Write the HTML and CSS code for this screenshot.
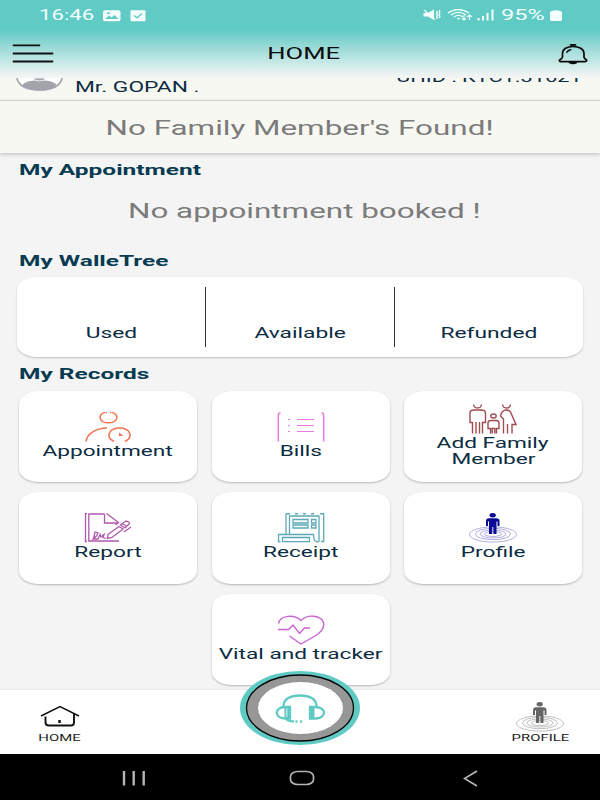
FILE: index.html
```html
<!DOCTYPE html>
<html lang="en">
<head>
<meta charset="utf-8">
<title>Home</title>
<link rel="stylesheet" href="styles.css">
</head>
<body>
<div class="phone">
  <header class="top">
    <div class="status">
      <span class="clock"><span class="t left">16:46</span></span>
      <svg class="st-left" width="43" height="12" viewBox="0 0 43 12">
        <rect x="0" y="0.3" width="17.500" height="11" rx="2" fill="#f4fffd"/>
        <path d="M2 9 L6 5.500 L8.500 7.500 L11.500 5 L15.500 9 Z" fill="#60cac4"/>
        <ellipse cx="5.500" cy="3.300" rx="1.600" ry="1" fill="#60cac4"/>
        <rect x="27.500" y="0.300" width="15" height="11" rx="1" fill="#f4fffd"/>
        <path d="M31 5.500 L34 7.800 L39 3.500" fill="none" stroke="#60cac4" stroke-width="1.400"/>
      </svg>
      <svg class="st-right" width="72" height="13" viewBox="0 0 72 13" fill="none" stroke="#f4fffd">
        <path d="M0.500 4 H5 L11 0.500 V11 L5 7.500 H0.500 Z" fill="#f4fffd" stroke="none"/>
        <path d="M1 1 L12 10.500" stroke-width="1.200"/>
        <path d="M13.500 2 l1 1.300 l-1 1.300 l1 1.300 l-1 1.300 l1 1.300 l-1 1.300 M16 1 l1 1.300 l-1 1.300 l1 1.300 l-1 1.300 l1 1.300 l-1 1.300" stroke-width="1.200"/>
        <path d="M25 4 Q35 -3 46 4 M28 6 Q35.500 0.800 43 6 M31 8 Q35.500 4.800 40 8" stroke-width="1.400"/>
        <path d="M33.500 9 h4 l-2 1.800 Z" fill="#f4fffd" stroke="none"/>
        <path d="M41 6 V11 M39 9.500 L41 11 L43 9.500 M46.500 11 V6 M44 8 L46.500 6 L49 8" stroke-width="1.100"/>
        <path d="M55.500 9 V11.500 M60 7 V11.500 M64.500 4 V11.500 M69.500 0.500 V11.500" stroke-width="2"/>
      </svg>
      <span class="battery"><span class="t left">95%</span></span>
      <svg class="st-bat" width="12" height="12" viewBox="0 0 12 12"><path d="M2 1 Q6 -0.500 10 1 Q12 1 12 2.500 V9.500 Q12 11 10 11 H2 Q0 11 0 9.500 V2.500 Q0 1 2 1 Z" fill="#f4fffd"/></svg>
    </div>
    <div class="appbar">
      <svg width="42" height="20" viewBox="0 0 42 20" stroke="#111" stroke-width="1.800" stroke-linecap="round"><path d="M1.500 1.300 H27.500 M1.500 9.500 H40.500 M1.500 17.500 H40.500"/></svg>
      <h1><span class="t">HOME</span></h1>
      <svg width="30" height="21" viewBox="0 0 30 21" fill="none" stroke="#0b0b0b" stroke-width="1.700" stroke-linecap="round" stroke-linejoin="round">
        <path d="M12.500 0.900 H17.500 M4.500 13 V9.500 C4.500 5 9 2.500 15 2.500 S26 5 26 9.500 V13 C26 15 28.700 15.300 28.700 16.500 C28.700 17.700 27 17.700 25 17.700 H5 C3 17.700 1.300 17.700 1.300 16.500 C1.300 15.300 4.500 15 4.500 13 Z"/>
        <path d="M9 8 Q10 6.500 12.500 5.800"/><path d="M11.500 18.500 H18.500 Q15 20.500 11.500 18.500 Z"/>
      </svg>
    </div>
  </header>

  <section class="person">
    <svg width="48" height="14" viewBox="0 0 48 14">
      <path d="M1 0 C3 9 12 12.500 23.500 12.500 S44 9 46 0 Z" fill="#fff"/>
      <path d="M6.500 6.500 C11 2.500 17 2.500 23.500 2.500 S36 2.500 40.500 6.500 C35 14.500 12 14.500 6.500 6.500 Z" fill="#a3a4ab"/>
      <path d="M17.500 0 Q18.500 3 23.500 3 T29.500 0 Z" fill="#a3a4ab" stroke="#fff" stroke-width="0.800"/>
      <path d="M0.800 0 C3 8.500 12 12 23.500 12 S44 8.500 46.200 0" fill="none" stroke="#a3a4ab" stroke-width="1.700"/>
    </svg>
    <div class="pname"><span class="t left">Mr. GOPAN .</span></div>
    <div class="uhid"><span class="t right">UHID : KTC1.31621</span></div>
  </section>
  <section class="family"><span class="t">No Family Member's Found!</span></section>

  <main>
    <h2><span class="t left">My Appointment</span></h2>
    <p class="empty"><span class="t">No appointment booked !</span></p>
    <h2 class="h-wallet"><span class="t left">My WalleTree</span></h2>
    <div class="wallet">
      <div><span class="t">Used</span></div>
      <div><span class="t">Available</span></div>
      <div><span class="t">Refunded</span></div>
    </div>
    <h2 class="h-rec"><span class="t left">My Records</span></h2>
    <div class="grid">
      <div class="card">
        <svg width="48" height="30" viewBox="0 0 48 30" fill="none" stroke="#f4714f" stroke-width="1.500">
          <path d="M21 0.400 C13.500 3 15 10.800 24.500 10.800 C34 10.800 35.500 3 28 0.400 M21.500 0.500 h1.500 M26 0.500 h1.500 M2 29.500 C3 22 11 16.300 23 16"/>
          <path d="M30 29.500 C21 25 25 16 35.500 16 C46 16 50 25 41 29.500"/><path d="M35 20.500 V24 L39.500 24 Z" fill="#f4714f" stroke="none"/>
        </svg>
        <div class="label"><span class="t">Appointment</span></div>
      </div>
      <div class="card">
        <svg width="48" height="30" viewBox="0 0 48 30" fill="none" stroke="#ea7ce0" stroke-width="1.500">
          <path d="M3.500 0.700 Q1.300 1 1.300 3.500 V29.500 M44.500 0.700 Q46.700 1 46.700 3.500 V29.500"/><path d="M11 7.500 h2 M11 13.500 h2 M11 19.500 h2 M20 7.500 H37 M20 13.500 H37 M20 19.500 H37" stroke-width="1.100"/>
        </svg>
        <div class="label"><span class="t">Bills</span></div>
      </div>
      <div class="card">
        <svg width="48" height="30" viewBox="0 0 48 30" fill="none" stroke="#a04b52" stroke-width="1.400">
          <path d="M4.500 0.500 Q5 4 8.500 4 T12.500 0.500 M33.500 0.500 Q34 4 37.500 4 T41.500 0.500"/>
          <path d="M3.500 29.500 V18.500 H1 V9 Q1 6 5 6 H12 Q16.500 6 16.500 9 V18.500 H13.500 V29.500 M7 29.500 V18 M10.500 29.500 V18"/>
          <ellipse cx="24.500" cy="12" rx="2.700" ry="2"/>
          <path d="M21.500 29.500 V24.500 H19 V19 Q19 16.500 22 16.500 H27 Q30 16.500 30 19 V24.500 H27.500 V29.500 M23.200 29.500 V24.500 H25.800 V29.500"/>
          <path d="M34.500 29.500 V15 L31.500 12 Q33 6 37 6 Q40.500 6 41.500 8 L47 20.500 H43 V29.500 M38.500 29.500 V20"/>
        </svg>
        <div class="label"><span class="t">Add Family</span><br><span class="t">Member</span></div>
      </div>
      <div class="card">
        <svg width="48" height="30" viewBox="0 0 48 30" fill="none" stroke="#b058ab" stroke-width="1.300">
          <path d="M3 0.500 H1.500 V28.500 H3 M20.500 1 H4.800 V28 H35 M20.500 1 V10 H33 M22.500 0.500 L34.500 9.500 L31.500 12"/>
          <path d="M24 21.500 L35 13.500 L39 16 L28 24.500 L23.500 25.500 Z M36.500 12 L41 8.500 Q45 7.500 45.500 10.500 L41 15 Z M38 10.500 L43 13.500 M47 14 L40 19"/>
          <path d="M9.500 26 L11 19 L14 20 L12.500 23 L9 26 H14 L16 21.500 L17 24 L20 21.500 L19 24.500 L22 25.500"/>
        </svg>
        <div class="label"><span class="t">Report</span></div>
      </div>
      <div class="card">
        <svg width="48" height="30" viewBox="0 0 48 30" fill="none" stroke="#5ba9b8" stroke-width="1.300">
          <path d="M9 21.500 V0.700 M12.500 21.500 V3 H42 V28 Q40.500 29.500 38.500 28 Q36.500 27 36.500 21.500 H1.500 V28.500 H3.500 M46.700 0.700 V28.500 H44 M5.500 24.500 H32.500 V28.700 H5.500 Z"/>
          <path d="M9 0.800 h4 M18 0.800 h3 M26 0.800 h3 M34 0.800 h3 M43 0.800 h4" stroke-width="1.500"/>
          <path d="M16 6.500 H31 V10 H16 Z M16 12 H31 V15 H16 Z M34.500 6.500 H39 V10 H34.500 Z M34.500 12 H39 V15 H34.500 Z"/>
        </svg>
        <div class="label"><span class="t">Receipt</span></div>
      </div>
      <div class="card">
        <svg width="48" height="30" viewBox="0 0 48 30" fill="none" stroke="#9c9cdb" stroke-width="0.800">
          <ellipse cx="24" cy="21.500" rx="23.500" ry="7.600"/><ellipse cx="24" cy="21" rx="17.500" ry="5.700"/><ellipse cx="24" cy="21" rx="13" ry="4"/><ellipse cx="24" cy="21" rx="8.500" ry="2.500"/>
          <g fill="#0b0b96" stroke="none"><ellipse cx="23.700" cy="2.300" rx="3.100" ry="2.200"/><path d="M20 5.300 H27.500 Q30.500 5.300 30.500 8 V13 H28.500 V8.500 H27.500 V21 H24.400 V14 H23.200 V21 H20 V8.500 H19 V13 H17 V8 Q17 5.300 20 5.300 Z"/></g>
        </svg>
        <div class="label"><span class="t">Profile</span></div>
      </div>
      <div class="card mid">
        <svg width="48" height="30" viewBox="0 0 48 30" fill="none" stroke="#c964d2" stroke-width="1.400">
          <path d="M1.500 8.500 C3 0.500 17 -1.500 24 5.500 C31 -1.500 44 0.500 46.500 7.500 C48 14 43 18 38 21 L24 29 L12.500 21 M1 14.500 H11.500 L16 10 L22.500 18.500 L27.500 13 H33"/>
        </svg>
        <div class="label"><span class="t">Vital and tracker</span></div>
      </div>
    </div>
  </main>

  <nav class="tabs">
    <div class="tab">
      <svg width="48" height="30" viewBox="0 0 48 30" fill="none" stroke="#111" stroke-width="1.500">
        <path d="M5 14 L24 4.500 L43 14"/><path d="M9.500 14.500 V20.500 Q9.500 23.500 13 23.500 H35 Q38 23.500 38 20.500 V12" stroke-width="1.900"/><path d="M23.500 18 V21" stroke-width="2.500"/>
      </svg>
      <div class="tlabel"><span class="t">HOME</span></div>
    </div>
    <div class="tab">
      <svg width="48" height="30" viewBox="0 0 48 30" fill="none" stroke="#b9b9b9" stroke-width="0.900">
        <ellipse cx="24" cy="21.500" rx="23.500" ry="7.600"/><ellipse cx="24" cy="21" rx="17.500" ry="5.700"/><ellipse cx="24" cy="21" rx="13" ry="4"/><ellipse cx="24" cy="21" rx="8.500" ry="2.500"/>
        <g fill="#666" stroke="none"><ellipse cx="23.700" cy="2.300" rx="3.100" ry="2.200"/><path d="M20 5.300 H27.500 Q30.500 5.300 30.500 8 V13 H28.500 V8.500 H27.500 V21 H24.400 V14 H23.200 V21 H20 V8.500 H19 V13 H17 V8 Q17 5.300 20 5.300 Z"/></g>
      </svg>
      <div class="tlabel"><span class="t">PROFILE</span></div>
    </div>
    <svg class="support" width="120" height="74" viewBox="0 0 120 74">
      <ellipse cx="60" cy="37" rx="60" ry="37" fill="#5fcac4"/>
      <ellipse cx="60" cy="37" rx="53.500" ry="33" fill="#979797" stroke="#050505" stroke-width="1.300"/>
      <ellipse cx="60.500" cy="37" rx="42.500" ry="26" fill="#fff"/>
      <g fill="none" stroke="#5fcac4" stroke-width="2.300">
        <path d="M43.500 36 C43 28 50 24.500 60 24.500 S77 28 76.500 36"/>
        <path d="M50 36 H45 C34 36 34 47.500 45 47.500 H50 Z M70 36 H75 C87 36 87 47.500 75 47.500 H70 Z"/>
        <path d="M46 47 Q47 50.500 54 50.500 M55.500 50.500 h2 M60 50.500 h2"/>
      </g>
      <path d="M44.500 36 H50 V47 H44.500 Z M70 36 H74.500 V47 H70 Z" fill="#5fcac4"/>
      <path d="M46.800 37.500 V46" stroke="#fff" stroke-width="0.800"/>
    </svg>
  </nav>
  <footer class="sys">
    <svg width="24" height="16" viewBox="0 0 24 16" stroke="#b5b5b5" stroke-width="2.400"><path d="M3 1 V15.500 M12.700 1 V15.500 M22.700 1 V15.500"/></svg>
    <svg class="sys-home" width="26" height="16" viewBox="0 0 26 16" fill="none" stroke="#b5b5b5" stroke-width="1.700"><rect x="1.500" y="1.500" width="23" height="13" rx="7" ry="5"/></svg>
    <svg width="15" height="17" viewBox="0 0 15 17" fill="none" stroke="#b5b5b5" stroke-width="1.700"><path d="M14 1 L1.500 8.500 L14 16"/></svg>
  </footer>
</div>
</body>
</html>
```
FILE: styles.css
```css
* { box-sizing: border-box; }
body { margin: 0; font-family: Roboto, "Liberation Sans", sans-serif; }
h1, h2, p { margin: 0; }
svg { display: block; flex: none; }
.phone { width: 600px; height: 800px; display: flex; flex-direction: column; background: #f4f4f4; overflow: hidden; color: #0b2c43; }

/* wide lettering */
.t { display: inline-block; white-space: nowrap; transform: scaleX(1.57); }
.t.left { transform-origin: left; }
.t.right { transform-origin: right; }

.top { flex: none; height: 78px; background: linear-gradient(#60cac4 0, #60cac4 29px, #f4f5f5 77px); }
.status { height: 30px; padding: 1px 38px 0 39px; display: flex; align-items: center; color: #f4fffd; font-size: 14.5px; line-height: 30px; }
.clock { width: 64px; }
.clock .t { transform: scaleX(1.53); }
.st-right { margin: 0 6px 0 auto; }
.battery { width: 49px; }
.battery .t { transform: scaleX(1.62); }
.appbar { height: 48px; display: flex; align-items: center; justify-content: space-between; padding: 0 12px; }
.appbar h1 { font-size: 16px; font-weight: 400; color: #0b0b0b; line-height: 20px; margin-right: 5px; }
.appbar .t { transform: scaleX(1.6); }

.person { flex: none; height: 23px; padding: 0 18px 0 16px; display: flex; align-items: flex-start; background: #f8f8f2; border-bottom: 1px solid #dedede; font-size: 14.5px; line-height: 17px; overflow: hidden; }
.pname { margin: 1px 0 0 11px; }
.uhid { margin: -9px 0 0 auto; height: 17px; }
.uhid .t { transform: scaleX(1.5); }
.family { flex: none; position: relative; height: 52px; padding-top: 2px; background: #f8f8f2; display: flex; align-items: center; justify-content: center; color: #7b7b7b; font-size: 20px; box-shadow: 0 1px 4px rgba(0,0,0,.25); }

main { flex: none; height: 536px; padding: 7px 17px 0; }
h2 { font-size: 15px; line-height: 20px; font-weight: 700; color: #073b52; padding-left: 2px; }
h2 .t { transform: scaleX(1.63); }
.empty { margin-top: 17px; line-height: 28px; padding-left: 8px; font-size: 20px; text-align: center; color: #7b7b7b; }
.h-wallet { margin-top: 26px; }
.wallet { margin-top: 6px; height: 80px; background: #fff; border-radius: 20px / 13px; box-shadow: 0 1px 2px rgba(0,0,0,.22); display: grid; grid-template-columns: 188px 189px 189px; padding: 10px 0; }
.wallet div { font-size: 14.5px; line-height: 17px; text-align: center; padding-top: 38px; }
.wallet div + div { border-left: 1px solid #333; }
.h-rec { margin-top: 7px; }
.grid { margin: 6.500px 1px 0 2px; display: grid; grid-template-columns: repeat(3, 178px); justify-content: space-between; row-gap: 10px; }
.card { height: 91.500px; background: #fff; border-radius: 20px / 13px; box-shadow: 0 1px 2px rgba(0,0,0,.25); display: flex; flex-direction: column; align-items: center; justify-content: center; padding-bottom: 2px; }
.mid { grid-column: 2; }
.label { padding-top: 1px; font-size: 14.800px; line-height: 16px; text-align: center; }
.label .t { transform: scaleX(1.53); }

.tabs { flex: none; position: relative; height: 65px; background: #fff; border-top: 1px solid #e8e8e8; display: flex; justify-content: space-between; padding: 12px 0 0; }
.tab { width: 120px; display: flex; flex-direction: column; align-items: center; }
.tlabel { font-size: 9.500px; line-height: 12px; color: #222; }
.support { position: absolute; left: 240px; top: -19px; }
.sys { flex: 1; background: #000; display: flex; align-items: center; padding: 2px 0 0 121px; }
.sys-home { margin: 0 148px 0 144px; }
```
